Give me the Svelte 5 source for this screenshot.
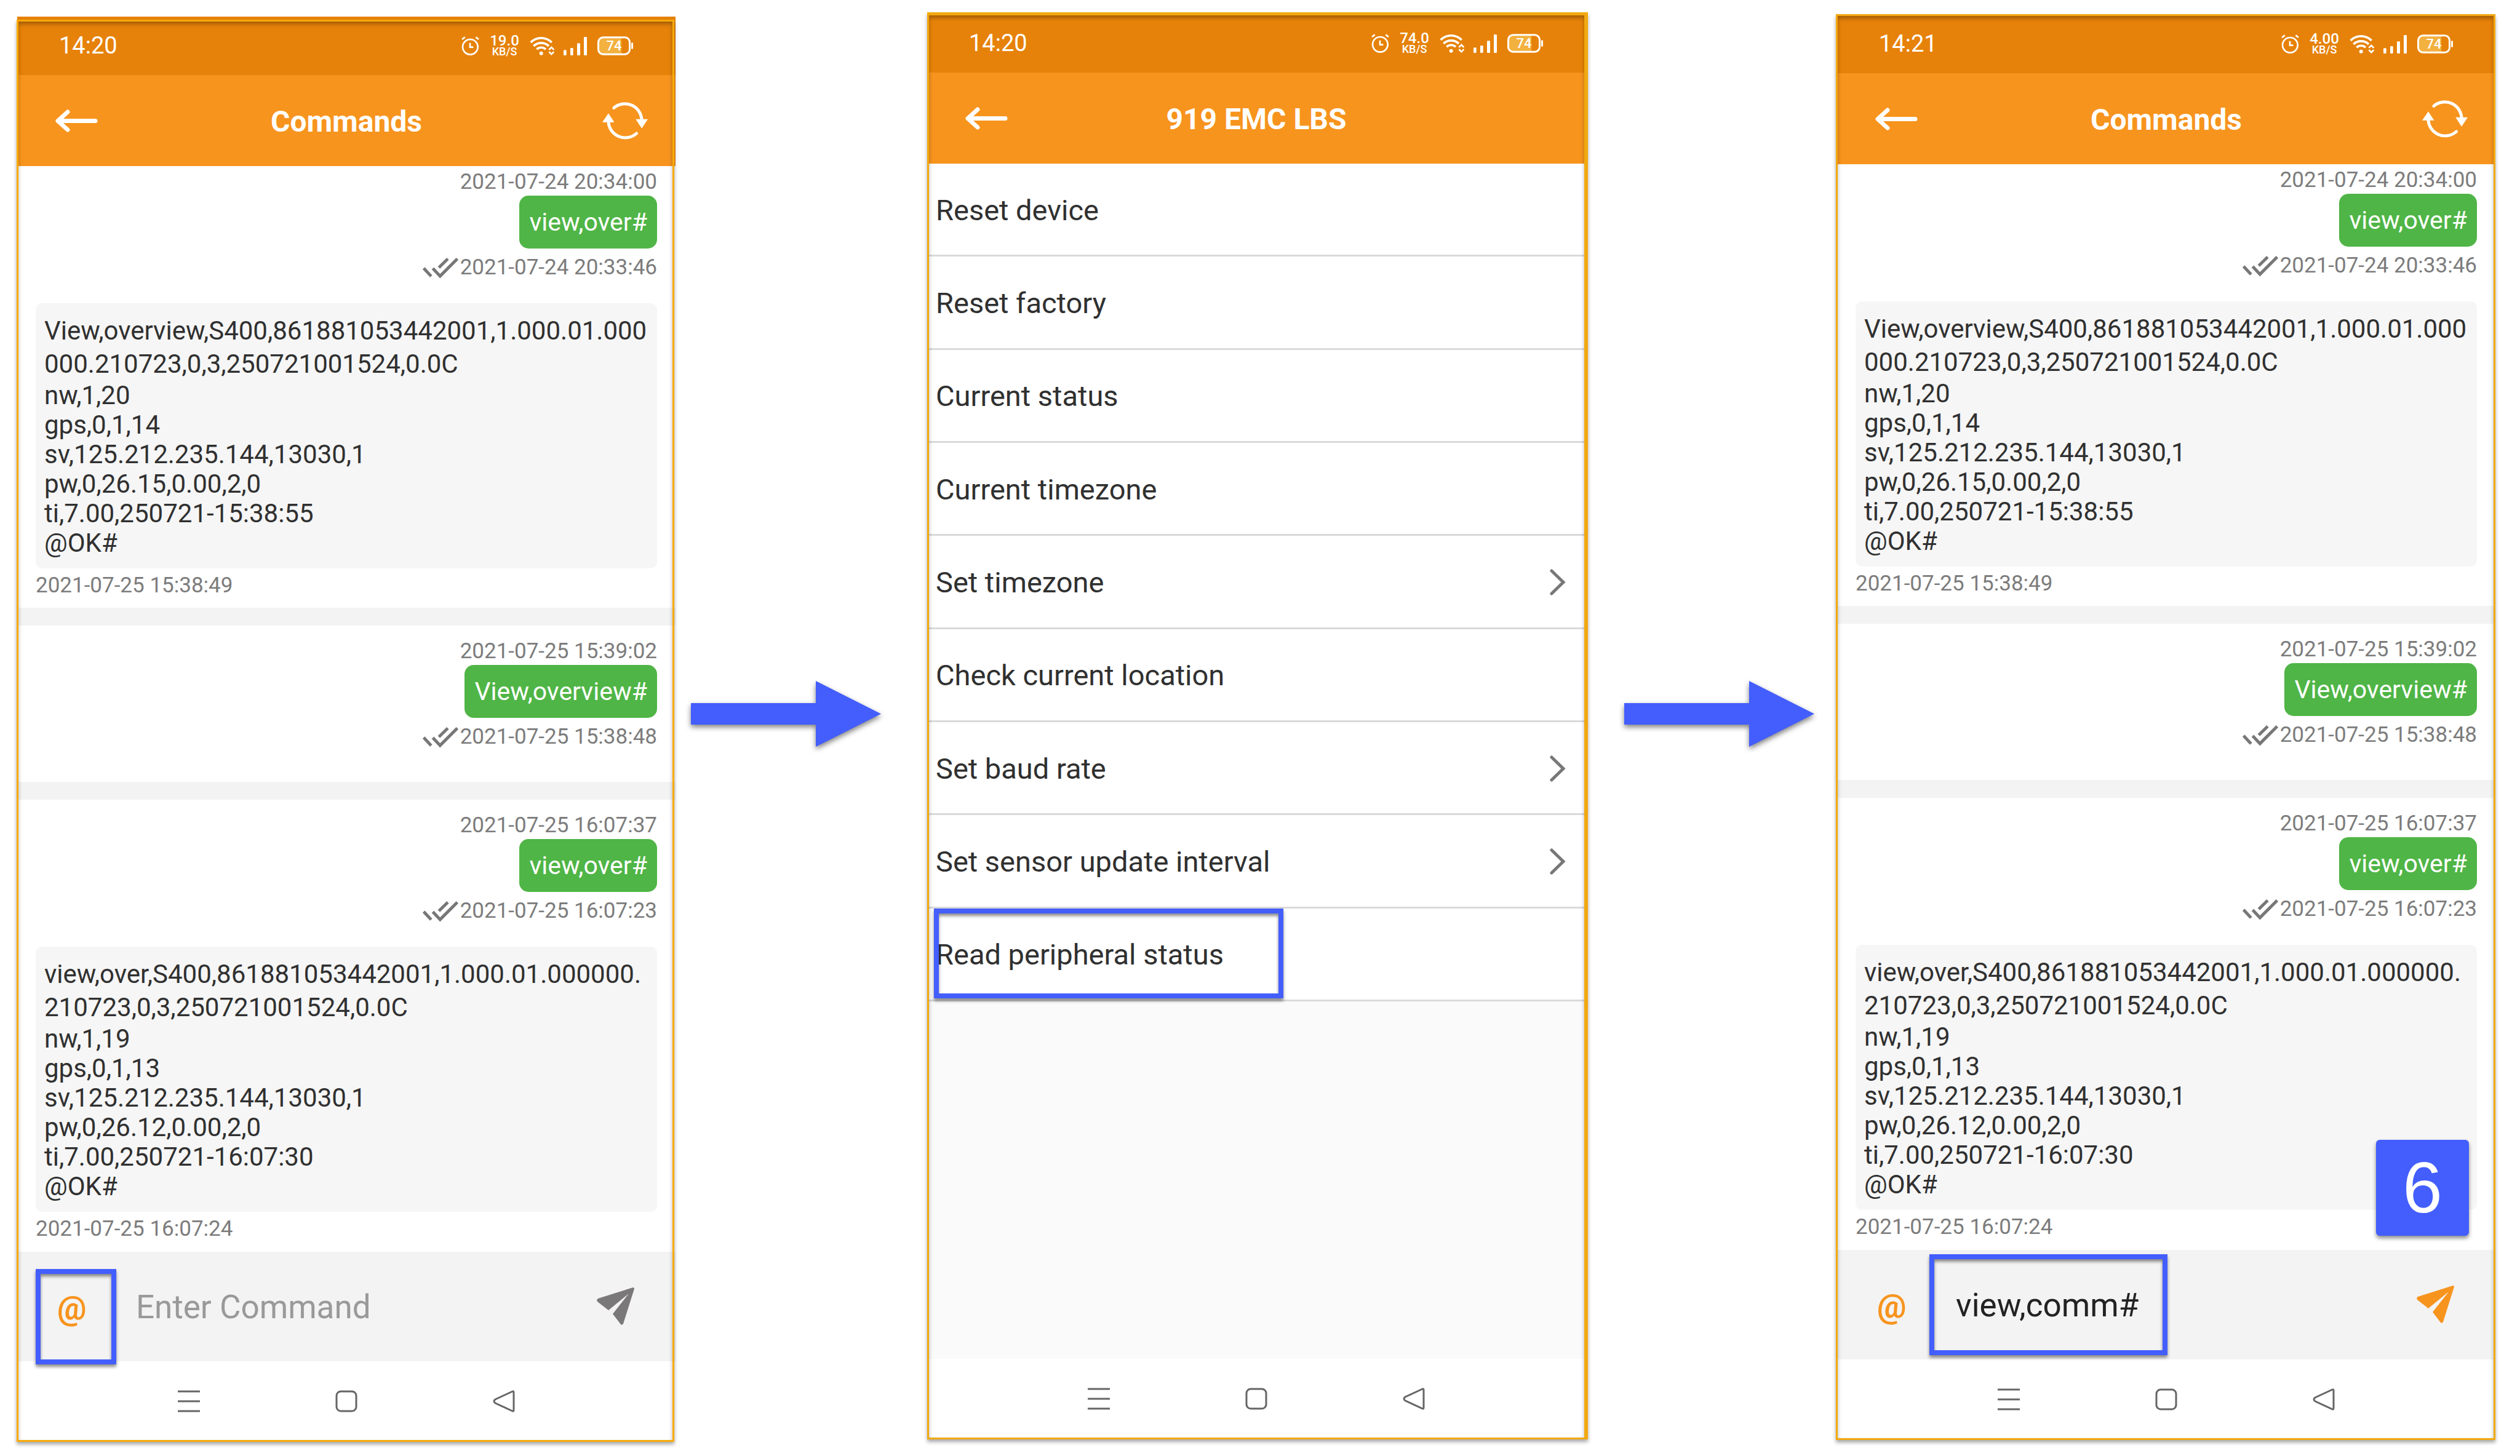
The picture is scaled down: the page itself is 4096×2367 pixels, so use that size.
<script>
  const firstReply = {
    lead: 'View,overview,S400,861881053442001,1.000.01.000\n000.210723,0,3,250721001524,0.0C',
    rest: 'nw,1,20\ngps,0,1,14\nsv,125.212.235.144,13030,1\npw,0,26.15,0.00,2,0\nti,7.00,250721-15:38:55\n@OK#',
    time: '2021-07-25 15:38:49'
  };
  const lastReply = {
    lead: 'view,over,S400,861881053442001,1.000.01.000000.\n210723,0,3,250721001524,0.0C',
    rest: 'nw,1,19\ngps,0,1,13\nsv,125.212.235.144,13030,1\npw,0,26.12,0.00,2,0\nti,7.00,250721-16:07:30\n@OK#',
    time: '2021-07-25 16:07:24'
  };
  const messages = [
    { created: '2021-07-24 20:34:00', text: 'view,over#', sent: '2021-07-24 20:33:46', reply: firstReply },
    { created: '2021-07-25 15:39:02', text: 'View,overview#', sent: '2021-07-25 15:38:48', reply: null },
    { created: '2021-07-25 16:07:37', text: 'view,over#', sent: '2021-07-25 16:07:23', reply: lastReply }
  ];
  const menu = [
    { label: 'Reset device' },
    { label: 'Reset factory' },
    { label: 'Current status' },
    { label: 'Current timezone' },
    { label: 'Set timezone', more: true },
    { label: 'Check current location' },
    { label: 'Set baud rate', more: true },
    { label: 'Set sensor update interval', more: true },
    { label: 'Read peripheral status', marked: true }
  ];
  let emptyCommand = $state('');
  let command = $state('view,comm#');
</script>

{#snippet statusBar(time, rate)}
  <div class="status">
    <span class="clock">{time}</span>
    <div class="indicators">
      <svg class="alarm" viewBox="0 0 87 93" aria-hidden="true">
        <g fill="none" stroke="#fff" stroke-width="8">
          <circle cx="43" cy="52" r="37" />
          <path d="M3 15 17 4M70 4l14 11M42 32v21h16" />
        </g>
      </svg>
      <span class="rate"><b>{rate}</b><small>KB/S</small></span>
      <svg class="wifi" viewBox="0 0 120 92" aria-hidden="true">
        <g fill="none" stroke="#fff" stroke-width="11">
          <path d="M5 29A72 72 0 0 1 107 29M19 47A53 53 0 0 1 93 47M34 63A32 32 0 0 1 78 63" />
          <path stroke-width="8" d="M94 65l12-12 12 12M94 75l12 12 12-12" />
        </g>
        <circle cx="56" cy="83" r="9" fill="#fff" />
      </svg>
      <svg class="signal" viewBox="0 0 114 90" aria-hidden="true">
        <g fill="#fff">
          <rect x="0" y="64" width="14" height="26" rx="4" />
          <rect x="33" y="54" width="14" height="36" rx="4" />
          <rect x="66" y="31" width="15" height="59" rx="4" />
          <rect x="99" y="0" width="15" height="90" rx="4" />
        </g>
      </svg>
      <span class="battery">
        <svg viewBox="0 0 175 92" aria-hidden="true">
          <path d="M118 8H26Q8 8 8 28v36q0 20 18 20h92z" fill="#f3b13f" />
          <rect x="4.500" y="4.500" width="154" height="83" rx="24" fill="none" stroke="#fff" stroke-width="9" />
          <rect x="166" y="30" width="9" height="32" rx="4" fill="#fff" />
        </svg>
        <span>74</span>
      </span>
    </div>
  </div>
{/snippet}

{#snippet header(title, refresh)}
  <header>
    <button class="back" aria-label="Back">
      <svg viewBox="0 0 69 37"><path d="M20 4 4 18.500 20 33M5 18.500H65" fill="none" stroke="#fff" stroke-width="7" stroke-linecap="round" stroke-linejoin="round" /></svg>
    </button>
    <h1>{title}</h1>
    {#if refresh}
      <button class="refresh" aria-label="Refresh">
        <svg viewBox="0 0 224 184">
          <g fill="none" stroke="#fff" stroke-width="15" stroke-linecap="round">
            <path d="M57 28A83 83 0 0 1 194 92M30 92A83 83 0 0 0 168 154" />
          </g>
          <path d="M164 84h60l-30 45zM30 55 0 99h59z" fill="#fff" />
        </svg>
      </button>
    {/if}
  </header>
{/snippet}

{#snippet chat()}
  <main class="chat">
    {#each messages as m}
      <section class="message">
        <time class="created">{m.created}</time>
        <p class="bubble">{m.text}</p>
        <div class="sent">
          <svg viewBox="0 0 176 99" aria-hidden="true"><path d="M5 51l37 40M50 52l36 38L171 5M80 48 124 5" fill="none" stroke="#777" stroke-width="15" /></svg>
          <time>{m.sent}</time>
        </div>
        {#if m.reply}
          <div class="reply">
            <p class="lead">{m.reply.lead}</p>
            <p class="rest">{m.reply.rest}</p>
          </div>
          <time class="answered">{m.reply.time}</time>
        {/if}
      </section>
    {/each}
  </main>
{/snippet}

{#snippet sendIcon()}
  <svg viewBox="0 0 61 61"><path d="M59 0 2 18Q-1 20 1 23L19 37 52 10 26 43 39 60Q41 62 43 59L61 2Q61 0 59 0Z" fill="currentColor" /></svg>
{/snippet}

{#snippet nav()}
  <nav>
    <button aria-label="Recent apps"><svg viewBox="0 0 36 36"><path d="M0 2h36M0 18h36M0 34h36" /></svg></button>
    <button aria-label="Home"><svg viewBox="0 0 36 36"><rect x="2" y="2" width="32" height="32" rx="7" /></svg></button>
    <button aria-label="Back"><svg viewBox="0 0 36 36"><path d="M32 2Q34 1 34 4v28q0 3-2 2L4 21Q0 18 4 15z" /></svg></button>
  </nav>
{/snippet}

{#snippet arrow(place)}
  <div class="step {place}">
    <svg viewBox="0 0 309 107" aria-hidden="true"><path d="M0 36H203V0L309 53.500 203 107V71H0z" fill="#435efd" /></svg>
  </div>
{/snippet}

<div class="board">
  <article class="phone one">
    {@render statusBar('14:20', '19.0')}
    {@render header('Commands', true)}
    {@render chat()}
    <form class="composer">
      <button type="button" class="at" aria-label="Insert command">@<i class="mark mark-at"></i></button>
      <div class="field"><input aria-label="Command" placeholder="Enter Command" bind:value={emptyCommand} /></div>
      <button type="button" class="send" aria-label="Send">{@render sendIcon()}</button>
    </form>
    {@render nav()}
  </article>

  {@render arrow('near')}

  <article class="phone two">
    {@render statusBar('14:20', '74.0')}
    {@render header('919 EMC LBS', false)}
    <main class="options">
      <ul>
        {#each menu as item}
          <li>
            <button>
              <span>{item.label}</span>
              {#if item.more}
                <svg viewBox="0 0 25 43" aria-hidden="true"><path d="M3 3 22 21.500 3 40" fill="none" stroke="#777" stroke-width="5" stroke-linecap="round" /></svg>
              {/if}
            </button>
            {#if item.marked}<i class="mark mark-row"></i>{/if}
          </li>
        {/each}
      </ul>
    </main>
    {@render nav()}
  </article>

  {@render arrow('far')}

  <article class="phone three">
    {@render statusBar('14:21', '4.00')}
    {@render header('Commands', true)}
    {@render chat()}
    <form class="composer">
      <button type="button" class="at" aria-label="Insert command">@</button>
      <div class="field"><input aria-label="Command" bind:value={command} /><i class="mark mark-field"></i></div>
      <button type="button" class="send ready" aria-label="Send">{@render sendIcon()}</button>
      <span class="badge">6</span>
    </form>
    {@render nav()}
  </article>
</div>

<style>
  :global(body) { margin: 0; background: #fff; }
  .board {
    box-sizing: border-box;
    display: grid;
    grid-template-columns: 1070fr 409fr 1070fr 409fr 1070fr;
    min-height: 100vh;
    padding: 0 40px 0 28px;
    overflow: hidden;
    font-family: Roboto, "Liberation Sans", sans-serif;
    color: #303030;
  }
  h1, p, ul { margin: 0; padding: 0; font-weight: inherit; }
  button, input {
    margin: 0;
    padding: 0;
    border: 0;
    background: none;
    font: inherit;
    color: inherit;
    outline: none;
  }
  svg { display: block; overflow: visible; }

  .phone { position: relative; display: flex; flex-direction: column; min-width: 0; background: #fff; }
  .phone::after {
    content: "";
    position: absolute;
    inset: 0;
    border: 3px solid #f2a90f;
    box-shadow: 0 4px 6px rgba(0, 0, 0, 0.35), inset 0 4px 6px rgba(0, 0, 0, 0.3);
    pointer-events: none;
  }
  .one { margin: 27px 0 24px; }
  .two { margin: 23px 0 28px; }
  .three { margin: 24px 0 27px; }
  .one::after { inset: 5px 2px -1px -1px; border-color: #f9ab08; }
  .two::after { inset: -3px -4px -1px 0; border-width: 5px 6px 3px 3px; }
  .three::after { inset: -1px 0 -1px -2px; }

  .status {
    display: flex;
    align-items: center;
    justify-content: space-between;
    height: 95px;
    padding: 0 69px 0 68px;
    background: #e68209;
    color: #fff;
  }
  .clock { font-size: 38px; line-height: 45px; }
  .indicators { display: flex; align-items: center; }
  .alarm { width: 29px; height: 31px; }
  .rate { display: flex; flex-direction: column; align-items: center; width: 48px; margin: 0 17px; }
  .rate b { font-size: 24px; line-height: 18px; font-weight: 500; }
  .rate small { font-size: 18px; line-height: 17px; font-weight: 500; }
  .wifi { width: 40px; height: 31px; }
  .signal { width: 38px; height: 30px; margin: 0 17px 0 15px; }
  .battery { display: grid; place-items: center; width: 58px; height: 31px; }
  .battery svg, .battery span { grid-area: 1 / 1; }
  .battery svg { width: 58px; height: 31px; }
  .battery span { padding-right: 4px; font-size: 22px; line-height: 26px; font-weight: 500; }

  header {
    display: grid;
    grid-template-columns: 1fr auto 1fr;
    align-items: center;
    height: 148px;
    padding: 0 45px 0 62px;
    background: #f7941e;
    color: #fff;
  }
  .back { justify-self: start; }
  .back svg { width: 69px; height: 37px; }
  header h1 { margin-right: 17px; padding-top: 3px; font-size: 48px; line-height: 56px; font-weight: 700; }
  .refresh { justify-self: end; }
  .refresh svg { width: 74px; height: 61px; }

  .chat { flex: 1; display: flex; flex-direction: column; padding-top: 5px; }
  .message { display: flex; flex-direction: column; align-items: flex-end; padding: 0 30px 15px; }
  .message + .message { border-top: 29px solid #f3f3f3; padding-top: 21px; }
  .message:nth-child(2) { padding-bottom: 52px; }
  time { font-size: 35px; line-height: 42px; color: #7c7c7c; }
  .bubble {
    margin: 1px 0 10px;
    padding: 19px 16px 18px;
    border-radius: 15px;
    background: #4fb546;
    color: #fff;
    font-size: 41px;
    line-height: 49px;
  }
  .sent { display: flex; align-items: center; gap: 3px; }
  .sent svg { width: 58px; height: 33px; }
  .reply {
    align-self: stretch;
    margin: 37px 0 7px;
    padding: 18px 0 17px 14px;
    border-radius: 10px;
    background: #f6f6f6;
    font-size: 42px;
  }
  .lead { line-height: 54px; white-space: pre; }
  .rest { line-height: 48px; white-space: pre; }
  .answered { align-self: flex-start; }

  .composer { position: relative; display: flex; height: 178px; background: #f3f3f3; font-size: 53px; line-height: 61px; }
  .at {
    position: relative;
    width: 131px;
    margin-left: 30px;
    padding: 6px 0 0 35px;
    text-align: left;
    font-weight: 700;
    color: #f7941e;
  }
  .field { position: relative; flex: 1; display: flex; margin-left: 32px; }
  .field input { width: 100%; padding-top: 2px; color: #222; }
  .field input::placeholder { color: #999; opacity: 1; }
  .send { padding: 0 67px 2px 20px; color: #7b7879; }
  .send svg { width: 61px; height: 61px; }
  .ready { color: #f7941e; }

  nav { display: flex; align-items: center; justify-content: center; gap: 220px; height: 130px; background: #fff; }
  nav svg { width: 36px; height: 36px; fill: none; stroke: #666; stroke-width: 3px; }

  .options { flex: 1; display: grid; grid-template-rows: 1362fr 581fr; background: #fafafa; }
  ul { display: grid; grid-auto-rows: 1fr; list-style: none; background: #fff; }
  li { position: relative; display: flex; border-bottom: 3px solid #d9d9d9; }
  li button {
    flex: 1;
    display: flex;
    align-items: center;
    justify-content: space-between;
    padding: 3px 33px 0 14px;
    font-size: 47px;
    line-height: 54px;
    text-align: left;
  }
  li svg { width: 25px; height: 43px; }

  .mark {
    position: absolute;
    box-sizing: border-box;
    border: 8px solid #435efd;
    box-shadow: 0 4px 5px rgba(0, 0, 0, 0.45), inset 0 4px 5px rgba(0, 0, 0, 0.45);
    pointer-events: none;
  }
  .mark-at { top: 28px; left: 0; width: 131px; height: 155px; }
  .mark-row { top: 0; left: 11px; width: 568px; height: 146px; }
  .mark-field { top: 7px; left: -43px; width: 387px; height: 164px; }
  .badge {
    position: absolute;
    right: 43px;
    bottom: 201px;
    display: flex;
    align-items: center;
    justify-content: center;
    width: 151px;
    height: 156px;
    border-radius: 6px;
    background: #435efd;
    box-shadow: 0 4px 6px rgba(0, 0, 0, 0.45);
    color: #fff;
    font-family: "Liberation Sans", sans-serif;
    font-size: 116px;
    line-height: 150px;
  }

  .step { display: flex; align-items: center; padding-bottom: 47px; }
  .step svg { width: 309px; height: 107px; filter: drop-shadow(0 4px 4px rgba(0, 0, 0, 0.5)); }
  .near { padding-left: 25px; }
  .far { padding-left: 63px; }
</style>
